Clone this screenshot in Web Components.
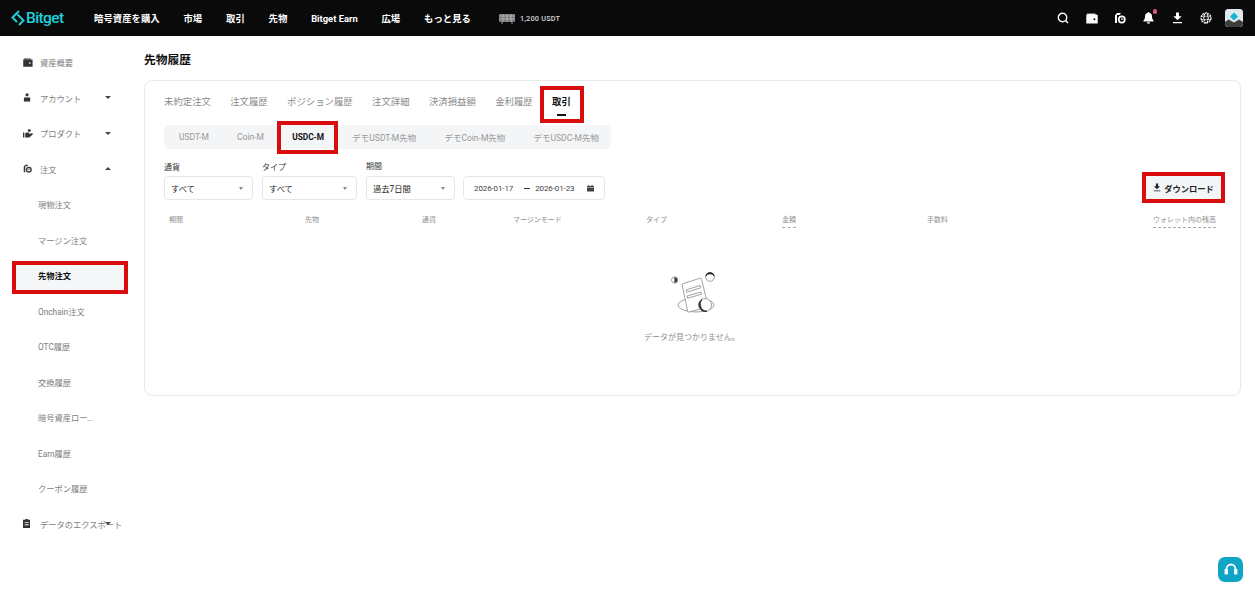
<!DOCTYPE html>
<html lang="ja"><head><meta charset="utf-8"><title>先物履歴</title>
<style>
html,body{margin:0;padding:0;background:#fff;height:100%;overflow:hidden}
body{font-family:Roboto,"Noto Sans CJK JP",sans-serif;color:#111}
</style></head><body>
<x-app>
  <x-topbar slot="top"></x-topbar>
  <x-sidebar slot="side"></x-sidebar>
  <x-history slot="main"></x-history>
</x-app>
<x-support></x-support>
<script>
const FONT='Roboto,"Noto Sans CJK JP",sans-serif';
function el(name,html){
  customElements.define(name,class extends HTMLElement{
    constructor(){super();this.attachShadow({mode:'open'}).innerHTML=typeof html==='function'?html(this):html;}
  });
}
const I={
 search:'<svg width="12" height="12" viewBox="0 0 12 12" fill="none" stroke="currentColor" stroke-width="1.4"><circle cx="5.5" cy="5.5" r="4.2"/><path d="M8.6 8.6 11 11"/></svg>',
 wallet:'<svg width="12" height="11" viewBox="0 0 12 11" fill="currentColor"><path d="M1 .6h8.5v1.300H1z"/><path fill-rule="evenodd" d="M.3 1.800h11.400v8.800H.3zM8.400 5.200a1 1 0 1 0 0 2 1 1 0 0 0 0-2z"/></svg>',
 orders:'<svg width="12" height="12" viewBox="0 0 12 12" fill="currentColor"><path d="M1 11V3.500L3 1h4L5.600 3H3v8z"/><path fill-rule="evenodd" d="M7.800 3.600a3.900 3.900 0 1 0 0 7.800 3.900 3.900 0 0 0 0-7.800zm0 1.700a2.200 2.200 0 1 1 0 4.400 2.200 2.200 0 0 1 0-4.400z"/><path d="M7.400 6h.9v1.300h1.100v.8h-2z"/></svg>',
 bell:'<svg width="11" height="12" viewBox="0 0 11 12" fill="currentColor"><path d="M5.500 0c.5 0 .8.300.8.800 1.800.4 2.700 1.800 2.700 3.600 0 1.900.5 3 1.500 4.100V9.500H.5V8.500C1.500 7.400 2 6.300 2 4.400 2 2.600 2.900 1.200 4.700.8c0-.5.3-.8.8-.8zM4 10.300h3A1.500 1.500 0 0 1 4 10.300z"/></svg>',
 dl:'<svg width="11" height="12" viewBox="0 0 11 12" fill="currentColor"><path d="M4 .5h3v3.700h2.700L5.500 8.300 1.300 4.200H4zM1 10h9v1.300H1z"/></svg>',
 globe:'<svg width="12" height="12" viewBox="0 0 12 12" fill="none" stroke="currentColor" stroke-width="1.100" stroke-dasharray="2 .7"><circle cx="6" cy="6" r="5"/><ellipse cx="6" cy="6" rx="2.200" ry="5"/><path d="M1 4.300h10M1 7.700h10"/></svg>',
 person:'<svg width="9" height="10" viewBox="0 0 9 10" fill="currentColor"><circle cx="4.500" cy="2" r="1.800"/><path d="M1 5h7v4.500H1z"/></svg>',
 product:'<svg width="11" height="10" viewBox="0 0 11 10" fill="currentColor"><path d="M0 4h1.500v5.500H0zM2.500 4.500 6 3.500l1 1.800 3.500-.5.500 1-4 3.700H2.500z"/><circle cx="7" cy="1.800" r="1.600"/></svg>',
 clip:'<svg width="9" height="11" viewBox="0 0 9 11" fill="currentColor"><path fill-rule="evenodd" d="M3 0h3v1h3v10H0V1h3zM2 4v1h5V4zm0 2.500v1h5v-1z"/></svg>',
 cal:'<svg width="7" height="7" viewBox="0 0 7 7" fill="#444"><path d="M1.500 0h1v1h2V0h1v1H7v1.500H0V1h1.500zM0 3h7v3.500H0z"/></svg>'
};

el('x-app',`<style>
:host{display:grid;grid-template-columns:132px 1fr;grid-template-rows:36px 1fr;grid-template-areas:"t t" "s m";height:605px;width:100%;font-family:${FONT}}
::slotted([slot=top]){grid-area:t}::slotted([slot=side]){grid-area:s}::slotted([slot=main]){grid-area:m}
</style><slot name="top"></slot><slot name="side"></slot><slot name="main"></slot>`);

el('x-topbar',`<style>
:host{display:flex;align-items:center;background:#0a0a0a;color:#fff;height:36px;box-sizing:border-box;padding:0 12px 0 11px;font-weight:700;font-size:9.400px}
.logo{display:flex;align-items:center;color:#1fd0dc;font-size:15.500px;font-weight:500;letter-spacing:-.6px;width:83px;flex:none}
.logo svg{margin-right:0}
nav{display:flex;gap:23.800px;align-items:center;white-space:nowrap}
.gift{display:flex;align-items:center;gap:4px;margin-left:27px;font-size:7.300px;color:#d5d5d5;letter-spacing:.2px;font-weight:500}
.icons{margin-left:auto;display:flex;align-items:center}
.ic{width:28.500px;display:flex;justify-content:center;position:relative}
.dot{position:absolute;top:-3px;right:6px;width:4.500px;height:4.500px;border-radius:50%;background:#e8557a}
.av{width:18px;height:18px;border-radius:4px;background:#dbe6ea;margin-left:5px;overflow:hidden;flex:none;display:block}
</style>
<div class="logo"><svg width="15" height="16" viewBox="0 0 15 16" fill="none" stroke="#1fd0dc" stroke-width="2"><path d="M8 1 1.500 7.500l4.500 4.500M6.500 4.500l6 6-4.500 4.500"/></svg><span>Bitget</span></div>
<nav><span>暗号資産を購入</span><span>市場</span><span>取引</span><span>先物</span><span>Bitget Earn</span><span>広場</span><span>もっと見る</span></nav>
<div class="gift"><svg width="18" height="12" viewBox="0 0 18 12"><rect x="1" y="2" width="16" height="8" fill="#777"/><path d="M1 4h16M1 7h16M5 2v8M9 2v8M13 2v8" stroke="#bbb" stroke-width=".8"/><path d="M4 10v2M14 10v2" stroke="#999"/></svg><span>1,200 USDT</span></div>
<div class="icons">
<div class="ic">${I.search}</div><div class="ic">${I.wallet}</div><div class="ic">${I.orders}</div>
<div class="ic">${I.bell}<i class="dot"></i></div><div class="ic">${I.dl}</div><div class="ic">${I.globe}</div>
<svg class="av" viewBox="0 0 18 18"><rect width="18" height="18" fill="#dfe8ec"/><path d="M9 3.500 13 7.500 9 11.500 5 7.500z" fill="#14b5cf"/><path d="M0 18v-5l3.500-2.500L9 13.500l5-3 4 2.500v5z" fill="#3d3d3d"/></svg>
</div>`);

el('x-nav-item',h=>{
  const sub=h.hasAttribute('sub'),active=h.hasAttribute('active'),caret=h.getAttribute('caret'),icon=I[h.getAttribute('icon')]||'';
  return `<style>
  :host{display:flex;align-items:center;height:35.500px;position:relative;font-size:8.250px;color:#7d7d7d;white-space:nowrap}
  .ico{width:17px;margin-left:23px;color:#333;display:flex;align-items:center}
  .ico svg{height:9px;width:auto}
  .t{width:66px}
  .sub{margin-left:38px;max-width:56px;overflow:hidden;text-overflow:ellipsis;position:relative;z-index:1}
  .caret{position:absolute;left:104.500px;width:0;height:0;border-left:3px solid transparent;border-right:3px solid transparent}
  .d{border-top:3.500px solid #444}.u{border-bottom:3.500px solid #444}
  :host([active]){color:#111;font-weight:700}
  .red{position:absolute;left:12px;right:4px;top:3.500px;bottom:-1px;border:4px solid #d90d0d;box-sizing:border-box;background:#f5f6f8}
  </style>
  ${sub?'<span class="sub"><slot></slot></span>':`<span class="ico">${icon}</span><span class="t"><slot></slot></span>`}
  ${caret?`<i class="caret ${caret}"></i>`:''}${active?'<i class="red"></i>':''}`;
});

el('x-sidebar',`<style>:host{display:block;padding-top:8.500px;box-sizing:border-box}</style>
<x-nav-item icon="wallet">資産概要</x-nav-item>
<x-nav-item icon="person" caret="d">アカウント</x-nav-item>
<x-nav-item icon="product" caret="d">プロダクト</x-nav-item>
<x-nav-item icon="orders" caret="u">注文</x-nav-item>
<x-nav-item sub>現物注文</x-nav-item>
<x-nav-item sub>マージン注文</x-nav-item>
<x-nav-item sub active>先物注文</x-nav-item>
<x-nav-item sub>Onchain注文</x-nav-item>
<x-nav-item sub>OTC履歴</x-nav-item>
<x-nav-item sub>交換履歴</x-nav-item>
<x-nav-item sub>暗号資産ローン履歴</x-nav-item>
<x-nav-item sub>Earn履歴</x-nav-item>
<x-nav-item sub>クーポン履歴</x-nav-item>
<x-nav-item icon="clip" caret="d">データのエクスポート</x-nav-item>`);

el('x-tabs',`<style>
:host{display:flex;gap:19.350px;font-size:9.400px;color:#8a8a8a;height:37px;align-items:flex-start;white-space:nowrap}
span{padding-top:10px;line-height:14px}
.on{position:relative;color:#111;font-weight:700}
.on::after{content:"";position:absolute;left:5px;right:5px;top:29px;height:2px;background:#111}
.on::before{content:"";position:absolute;left:-12px;right:-13px;top:1px;height:37px;border:4px solid #d90d0d;box-sizing:border-box}
</style><span>未約定注文</span><span>注文履歴</span><span>ポジション履歴</span><span>注文詳細</span><span>決済損益額</span><span>金利履歴</span><span class="on">取引</span>`);

el('x-pills',`<style>
:host{display:flex;gap:28.200px;width:447px;height:24px;box-sizing:border-box;padding:0 15px;align-items:center;background:#f3f5f7;border-radius:5px;font-size:8.500px;color:#999;white-space:nowrap}
.on{position:relative;color:#111;font-weight:700;font-size:8.300px;align-self:stretch;display:flex;align-items:center}
.on::before{content:"";position:absolute;left:-15px;right:-14px;top:-4px;bottom:-5px;border:4px solid #d90d0d;box-sizing:border-box;}
</style><span>USDT-M</span><span>Coin-M</span><span class="on">USDC-M</span><span>デモUSDT-M先物</span><span>デモCoin-M先物</span><span>デモUSDC-M先物</span>`);

el('x-field',h=>`<style>
:host{display:flex;flex-direction:column;font-size:8.250px;color:#222}
label{line-height:12px;height:14px;font-size:8px;color:#333}
:host([up]) label{transform:translateY(-1.500px)}
.box{height:24px;box-sizing:border-box;border:1px solid #e6e6e6;border-radius:4px;display:flex;align-items:center;padding:0 9px 0 6px;justify-content:space-between}
i{width:0;height:0;border-left:2.500px solid transparent;border-right:2.500px solid transparent;border-top:3px solid #888}
</style><label>${h.getAttribute('label')}</label><div class="box"><span><slot></slot></span><i></i></div>`);

el('x-date',`<style>
:host{display:flex;align-items:center;height:24px;box-sizing:border-box;border:1px solid #e6e6e6;border-radius:4px;width:142px;padding:0 10px 0 10px;font-size:8px;letter-spacing:-.12px;color:#444;align-self:flex-end;white-space:nowrap}
b{font-weight:400;margin:0 5px 0 11px;width:6px;height:1px;background:#333}
svg{margin-left:auto}
</style><span>2026-01-17</span><b></b><span>2026-01-23</span>${I.cal}`);

el('x-download',`<style>
:host{display:flex;align-items:center;justify-content:center;gap:3px;position:relative;width:75px;height:23px;background:#f3f5f7;border-radius:3px;font-size:8.250px;font-weight:700;color:#222;align-self:flex-end;margin-bottom:1px;white-space:nowrap}
i{position:absolute;inset:-4px;border:4px solid #d90d0d;box-sizing:border-box}
svg{width:8px;height:9px}
</style>${I.dl}<span>ダウンロード</span><i></i>`);

el('x-filters',`<style>
:host{display:flex;height:38px;margin-top:13px;gap:9px}
.end{margin-left:auto;display:flex;margin-right:19px}
x-date{margin-left:-1px}
</style>
<x-field label="通貨" style="width:89px">すべて</x-field>
<x-field label="タイプ" style="width:95px">すべて</x-field>
<x-field label="期間" up style="width:89px">過去7日間</x-field>
<x-date></x-date>
<div class="end"><x-download></x-download></div>`);

el('x-table-head',`<style>
:host{display:grid;grid-template-columns:136px 117px 91px 133px 136px 145px 1fr;padding:0 24px 0 5px;margin-top:15px;font-size:7px;color:#909090;height:14px;align-items:start;white-space:nowrap;line-height:11px}
.u{border-bottom:1px dashed #aaa;padding-bottom:1px;justify-self:start}
</style><span>期間</span><span>先物</span><span>通貨</span><span>マージンモード</span><span>タイプ</span><span class="u">金額</span><span style="display:flex;justify-content:space-between"><span>手数料</span><span class="u">ウォレット内の残高</span></span>`);

el('x-empty',`<style>
:host{display:flex;flex-direction:column;align-items:center;font-size:8px;color:#8e8e8e;margin-top:43px;padding-right:20px}
svg{display:block;margin:0 0 15px 5px}
</style>
<svg width="48" height="44" viewBox="0 0 48 44" fill="none" stroke="#8a8a8a" stroke-width=".8">
<ellipse cx="25" cy="33" rx="18" ry="7"/>
<path fill="#fff" d="M11.800 11.800 29 6.200c.8-.2 1.300 0 1.500.8l6.500 27c.2.800 0 1.200-.8 1.400L18 40c-.8.200-1.200 0-1.400-.8L11.200 13c-.1-.7 0-1 .6-1.200z"/>
<path d="m15 18 14-4.500.7 2.300-14 4.500zM16 24l14-4 .6 2.200-14 4z"/>
<circle cx="3.500" cy="8" r="3" fill="#fff"/><path d="M3.500 5a3 3 0 0 1 0 6z" fill="#333"/>
<circle cx="39" cy="5" r="4.300" fill="#fff"/><path d="M34.800 4a4.300 4.300 0 0 1 8.400 0 5 5 0 0 0-8.400 0z" fill="#222" stroke="#222"/>
<circle cx="34" cy="33" r="6.500" fill="#fff"/><path d="M31 27.500a6.500 6.500 0 0 0 5 11.700 7 7 0 0 1-5-11.700z" fill="#222" stroke="#222"/>
</svg><span>データが見つかりません。</span>`);

el('x-history',`<style>
:host{display:block;padding:0 14px 0 12px}
h1{margin:0;height:44px;font-size:11.750px;font-weight:700;line-height:48px;color:#111}
.card{border:1px solid #e8e8e8;border-radius:8px;height:316px;box-sizing:border-box;padding:4px 0 0 19px}
x-pills{margin-top:3px}
</style><h1>先物履歴</h1><div class="card"><x-tabs></x-tabs><x-pills></x-pills><x-filters></x-filters><x-table-head></x-table-head><x-empty></x-empty></div>`);

el('x-support',`<style>
:host{position:fixed;left:1218px;top:557px;width:25px;height:25px;border-radius:7px;background:#10a5c4;display:flex;align-items:center;justify-content:center}
</style><svg width="14" height="13" viewBox="0 0 14 13" fill="none" stroke="#fff" stroke-width="1.800"><path d="M2.500 8V6a4.500 4.500 0 0 1 9 0v2"/><rect x="1.500" y="7" width="1.500" height="3.500" fill="#fff"/><rect x="11" y="7" width="1.500" height="3.500" fill="#fff"/></svg>`);
</script></body></html>
